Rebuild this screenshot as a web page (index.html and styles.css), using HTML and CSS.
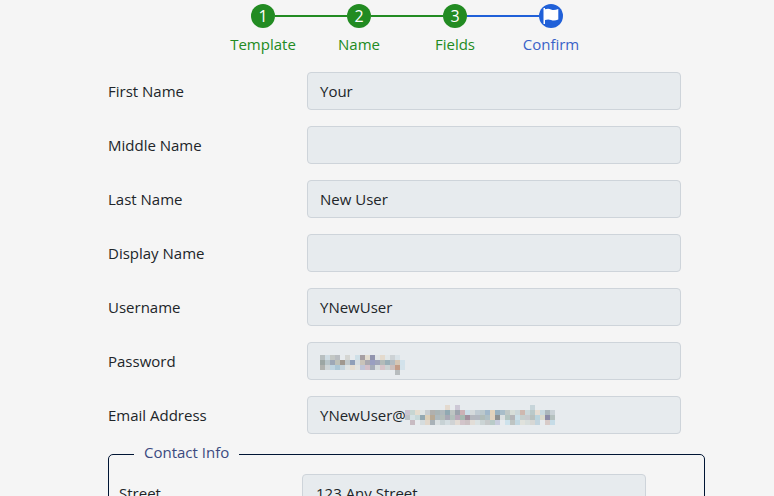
FILE: index.html
```
<!DOCTYPE html>
<html lang="en">
<head>
<meta charset="utf-8">
<title>New User</title>
<link rel="stylesheet" href="styles.css">
</head>
<body>
<ol class="steps">
  <li class="step"><span class="dot">1</span><span class="caption">Template</span></li>
  <li class="step"><span class="dot">2</span><span class="caption">Name</span></li>
  <li class="step"><span class="dot">3</span><span class="caption">Fields</span></li>
  <li class="step current"><span class="dot"><svg width="16" height="16" viewBox="0 0 16 16"><path fill="#fff" d="M.5 0h1.500v1.300C4.300.6 6 .6 8 1.400c2.300.9 4.200.7 7.300-.5v10.600c-2.900 1.300-5 1.300-7.300.5-2-.8-3.700-.8-6 0V16H.5z"/></svg></span><span class="caption">Confirm</span></li>
</ol>
<main class="form">
  <div class="row"><span class="label">First Name</span><div class="field">Your</div></div>
  <div class="row"><span class="label">Middle Name</span><div class="field"></div></div>
  <div class="row"><span class="label">Last Name</span><div class="field">New User</div></div>
  <div class="row"><span class="label">Display Name</span><div class="field"></div></div>
  <div class="row"><span class="label">Username</span><div class="field">YNewUser</div></div>
  <div class="row"><span class="label">Password</span><div class="field"><svg class="mask" id="password" width="85" height="20"></svg></div></div>
  <div class="row"><span class="label">Email Address</span><div class="field"><span class="mail">YNewUser@</span><svg class="mask" id="domain" width="150" height="20"></svg></div></div>
  <fieldset class="group">
    <legend><span class="title">Contact Info</span></legend>
    <div class="row"><span class="label">Street</span><div class="field">123 Any Street</div></div>
  </fieldset>
</main>
<script src="mask.js"></script>
</body>
</html>
```
FILE: styles.css
```
* { box-sizing: border-box; }
html { overflow: hidden; }
body { margin: 0; height: 496px; overflow: hidden; background: #f5f5f5; color: #212529; font: 15px/24px "Open Sans", "Noto Sans", sans-serif; }
.steps { display: flex; width: 384px; margin: 0 0 0 215px; padding: 4px 0 0; list-style: none; }
.step { position: relative; flex: 0 0 96px; height: 68px; display: flex; flex-direction: column; align-items: center; gap: 4px; color: #228b22; }
.step + .step::before { content: ""; position: absolute; top: 11px; left: -36px; width: 72px; height: 2px; background: #228b22; }
.step.current { color: #3a62c8; }
.step.current::before { background: #2060d8 !important; }
.dot { width: 24px; height: 24px; border-radius: 50%; background: #228b22; color: #fff; font-size: 16px; display: flex; align-items: center; justify-content: center; }
.current .dot { background: #2060d8; }
.form { width: 597px; margin-left: 108px; }
.row { display: flex; align-items: center; height: 38px; margin-bottom: 16px; }
.label { width: 199px; }
.field { display: flex; align-items: center; width: 374px; height: 38px; padding: 0 12px; border: 1px solid #ced4da; border-radius: 4px; background: #e7ebee; white-space: nowrap; }
.mail { width: 85px; }
.mask { display: block; }
#password { margin-top: 8px; }
.group { height: 90px; margin: -8px 0 0; padding: 8px 10px 0; border: 1px solid #001534; border-radius: 5px; }
.group legend { margin-left: 15px; padding: 0 10px; color: #3b4a80; }
.title { display: block; transform: translateY(-2px); }
.group .label { width: 183px; }
.group .field { width: 344px; padding-left: 13px; }
```
FILE: mask.js
```
const palettes = {
  password: [
    "b8bfc0 cfdce3 c3c7c4 b9bdc1 e7ebee d5d6d3 e7ebee cfe0e8 a69fa3 e2dccf 9194ae e1e5e6 e4dacd e1e7e9 cdd2d5 d9e2e7 e7ebee",
    "9ca6a3 b8c5c9 9da8b7 bdc1b9 a0988f c1c9cc 8f9fb8 d6dee1 c9c3b9 aaa8af 999fc1 9fa5b9 b3bbb9 9aafb8 b2bbc1 d5c6b4 d2e2eb",
    "b0b2ae ced5d7 bfd5e1 abc7d6 c4d3dc dfe3e3 e4dccf e1e3e0 bfc4d6 d3bfc8 a6adb8 d6dcdc d6c4c9 ccd2d3 cbbfbd c39c87 d4e2ea",
    "- - - - - - - - - - - - - - - b7bcbe -"
  ],
  domain: [
    "- - - - - - - - e4dacf - cdc8d6 - - - - - - - - - - - - - - c7d5da - - - - -",
    "ccc5d2 c7d6d2 e5ddcf dfe4e4 c8cdd0 b0b0ae a9b4b5 b0b9bd 91a9b2 bec5c3 9ca3ad cbb1b5 cbdee8 d5dadc c0cbd3 bbc8cc a1b8ca e3d3bb 99b1bf a9bdc9 c0c8c6 d7ddd8 ccd7da ceb8af cbd8da bac9c9 e5ddd3 c8d8df abb6bc c9d1d6",
    "bec3c8 d5e1e3 c7d9d9 94a9b2 dccfb8 b7a995 adb9be b3bdb9 a8a8b5 b3c0bc b8a8b9 a7b9b1 a28f9e b5b8bf b3b8c1 b0bcb8 afc0c5 e2d3be 8f9292 dce0e1 b4c5c1 b5b5b8 cbdfe8 c6cfcd c8cbce b8c1bf bbd4dd dad9cd 8c8ba7 b5c1bf",
    "- c8bbc2 - d5dcde e1d7cb a9b2b8 dae0e2 c7d2d5 d3dde1 d0d3d5 e3dbd4 d2c4ca ccc1c4 e2ddd7 dae2e3 cbd4d5 c6c9ca b9cbc8 c8cdde - cde2ec bec4c2 c1d7e1 e0e2dc d7dedc d7d7d4 c2d4de e7ebee d8cbc8 c6dce7"
  ]
};
for (const [id, rows] of Object.entries(palettes)) {
  const svg = document.getElementById(id);
  rows.forEach((row, y) => row.split(" ").forEach((color, x) => {
    if (color === "-") return;
    const cell = document.createElementNS("http://www.w3.org/2000/svg", "rect");
    cell.setAttribute("x", x * 5);
    cell.setAttribute("y", y * 5);
    cell.setAttribute("width", 5);
    cell.setAttribute("height", 5);
    cell.setAttribute("fill", "#" + color);
    svg.append(cell);
  }));
}
```
